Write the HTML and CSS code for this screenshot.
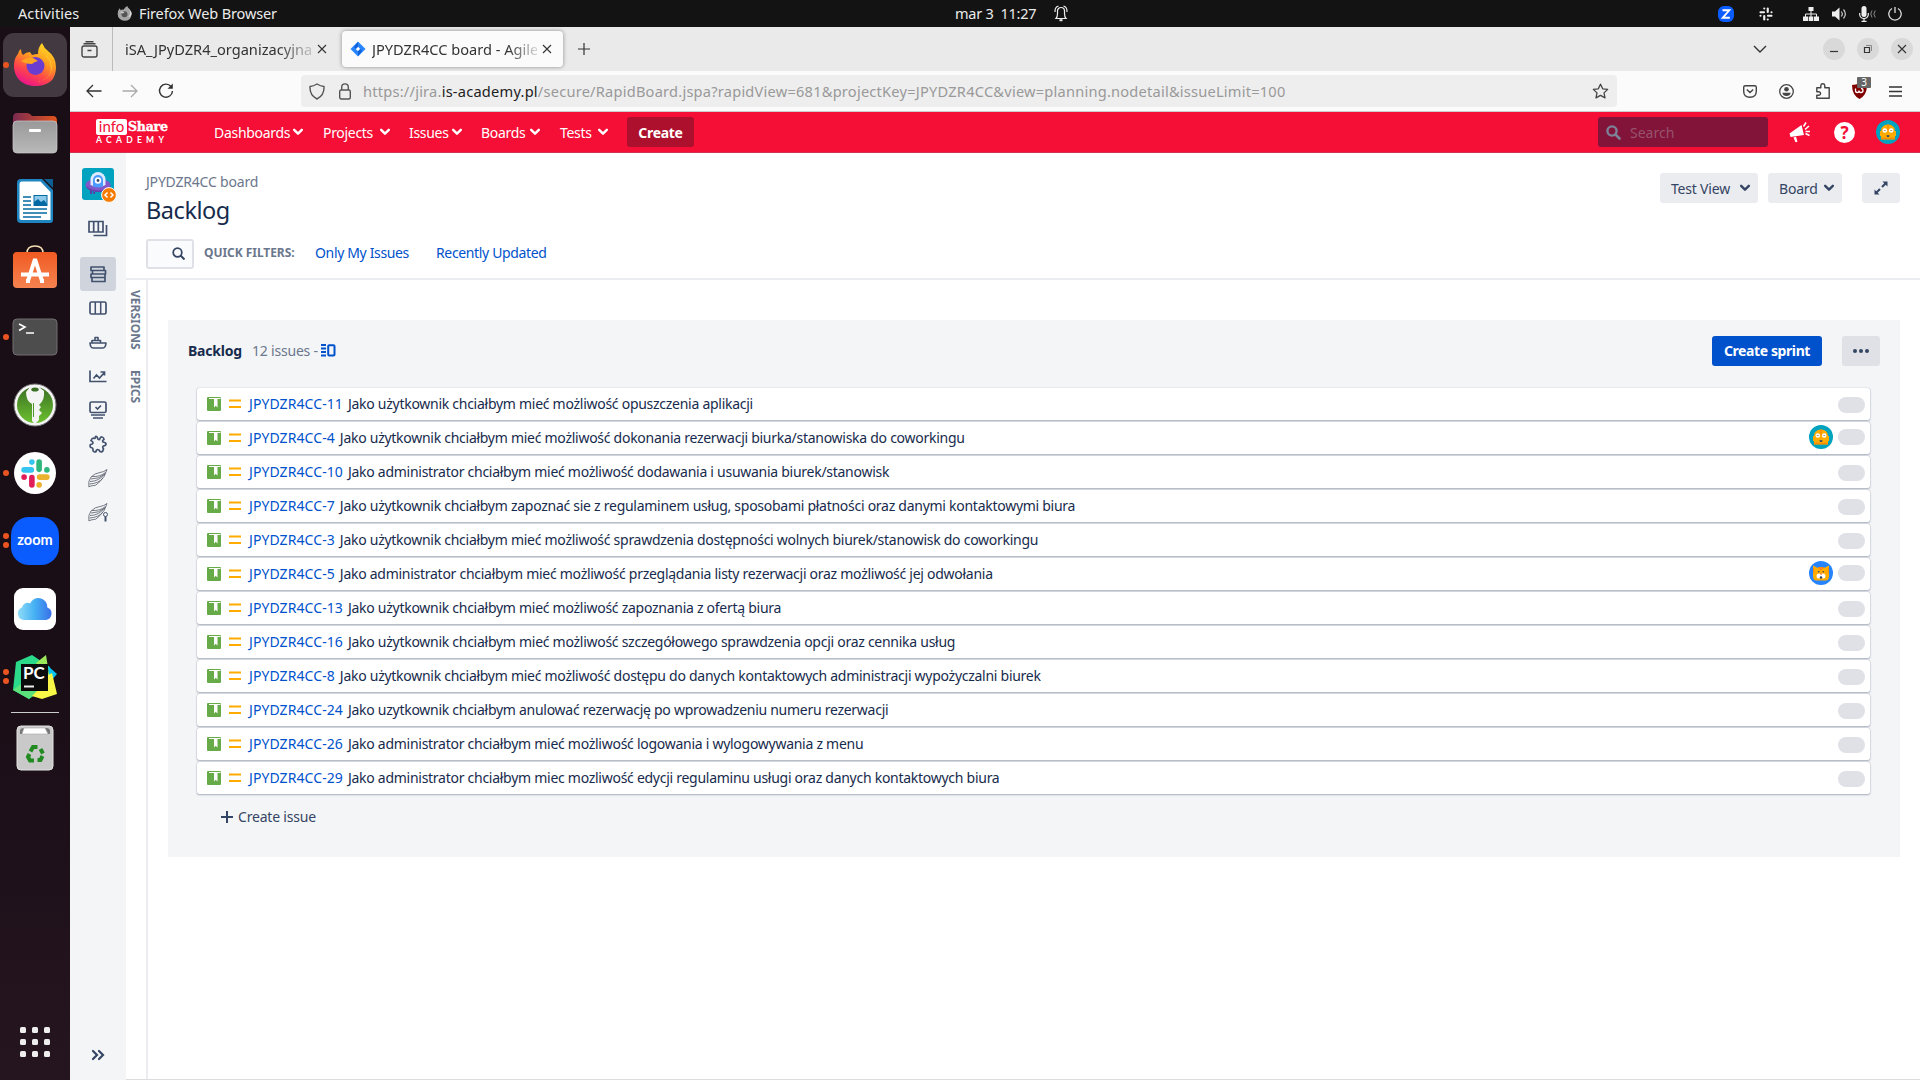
FILE: index.html
```html
<!DOCTYPE html>
<html lang="pl">
<head>
<meta charset="utf-8">
<title>JPYDZR4CC board - Agile Board</title>
<link rel="stylesheet" href="styles.css">
</head>
<body>
<svg class="defs" aria-hidden="true">
  <defs>
    <linearGradient id="fx" x1=".8" y1="0" x2=".3" y2="1"><stop offset="0" stop-color="#ffe226"/><stop offset=".4" stop-color="#ff9a1f"/><stop offset=".7" stop-color="#ff4649"/><stop offset="1" stop-color="#e9118f"/></linearGradient>
    <linearGradient id="fold" x1="0" y1="0" x2="0" y2="1"><stop offset="0" stop-color="#999"/><stop offset="1" stop-color="#b9b9b9"/></linearGradient>
    <linearGradient id="foldback"><stop offset="0" stop-color="#7b2a52"/><stop offset="1" stop-color="#e2541d"/></linearGradient>
    <linearGradient id="key" x1="0" y1="0" x2="0" y2="1"><stop offset="0" stop-color="#3a7024"/><stop offset="1" stop-color="#6cc02f"/></linearGradient>
    <linearGradient id="cloud"><stop offset="0" stop-color="#8fdcf8"/><stop offset=".5" stop-color="#45b0f3"/><stop offset="1" stop-color="#3a70e8"/></linearGradient>
    <linearGradient id="soft" x1="0" y1="0" x2="0" y2="1"><stop offset="0" stop-color="#f15a22"/><stop offset="1" stop-color="#f58350"/></linearGradient>
    <symbol id="chev" viewBox="0 0 10 10"><path d="M1.800 3.200 5 6.400l3.200-3.200" fill="none" stroke="currentColor" stroke-width="2" stroke-linecap="round" stroke-linejoin="round"/></symbol>
    <symbol id="close" viewBox="0 0 10 10"><path d="M1 1l8 8M9 1 1 9" fill="none" stroke="currentColor" stroke-width="1.100"/></symbol>
    <symbol id="story" viewBox="0 0 14 14"><rect width="14" height="14" rx="1" fill="#67ab49"/><path d="M2 1.500h11.500" stroke="#fff"/><path d="M7 1.500h3.500v9L8.700 8.800 7 10.500z" fill="#fff"/></symbol>
    <symbol id="medium" viewBox="0 0 12 10"><path d="M0 1.500h12M0 8h12" stroke="#ffab00" stroke-width="2"/></symbol>
    <symbol id="robot" viewBox="0 0 24 24"><circle cx="12" cy="12" r="12" fill="#00a3bf"/><path d="M5 11q0-6 7-6.500 7 .5 7 6.500h1v5h-1v3.500H5V16H4v-5z" fill="#ffab00"/><path d="M12 4.500v6M5 18.500h14" stroke="#ff8b00" stroke-width="1.400"/><circle cx="8.800" cy="10.500" r="2.300" fill="#fff"/><circle cx="15.200" cy="10.500" r="2.300" fill="#fff"/><path d="M7.800 10.500h2M14.200 10.500h2" stroke="#aa9a80"/><path d="M10.300 15.200h3.400L12.800 17h-1.600z" fill="#344563"/></symbol>
    <symbol id="cat" viewBox="0 0 24 24"><circle cx="12" cy="12" r="12" fill="#2684ff"/><path d="M4 4.500 9 7h6l5-2.500V15q0 4.500-3.500 4.500h-9Q4 19.500 4 15z" fill="#ffab00"/><path d="M9.500 6.500h5L12 9zM4.500 7v5M19.500 7v5" fill="#ff7452" stroke="#ff8b00"/><circle cx="9.700" cy="10.700" r=".8" fill="#344563"/><circle cx="14.300" cy="10.700" r=".8" fill="#344563"/><circle cx="10" cy="15" r="2.500" fill="#fff"/><circle cx="14" cy="15" r="2.500" fill="#fff"/><path d="M10.700 12.500h2.600L12 14.200z" fill="#ff7452"/><circle cx="12" cy="16.500" r="1.200" fill="#344563"/></symbol>
    <symbol id="feather" viewBox="0 0 20 20"><path d="M19 1.500Q17 9 12 13.500 8 18.500 3 18L.8 18.800Q0 13 3 9q4-4 9-4.500 4-.5 7-3zM2 13.500q9 0 15-8M1.500 16q9-.5 13.500-6M4 8.500q8 .5 13.500-4M3 11q8 0 14-5" fill="none" stroke="#555c68" stroke-width=".8"/></symbol>
    <symbol id="slackmark" viewBox="0 0 28 28"><g stroke-width="5.400" stroke-linecap="round"><path d="M3 10.500h7M10.500 3h.01" stroke="#36c5f0"/><path d="M17.500 3v7M25 10.500h.01" stroke="#2eb67d"/><path d="M25 17.500h-7M17.500 25h.01" stroke="#ecb22e"/><path d="M10.500 25v-7M3 17.500h.01" stroke="#e01e5a"/></g></symbol>
  </defs>
</svg>

<header class="topbar">
  <span class="activities">Activities</span>
  <span class="app-menu"><svg width="15" height="15" viewBox="0 0 16 16"><path d="M8 15.800A7.300 7.300 0 0 1 .7 8.500Q.7 5 2.800 2.500L4 4.500Q5.500 3.500 7 4q1.500-3 4-4 .5 2 2.500 4t2 5q-.5 6.800-7.500 6.800z" fill="#a5a5a5"/><path d="M11 1q3 3 3 6t-2 5q4-1 3.500-5Q14 3 11 1z" fill="#ddd"/><circle cx="8" cy="8.700" r="3.200" fill="#555"/><path d="M3 6.500q2.500-1.500 5 .3L6 8z" fill="#ccc"/></svg>Firefox Web Browser</span>
  <span class="clock">mar 3&nbsp; 11:27<svg width="14" height="17" viewBox="0 0 14 17"><path d="M2 13.500Q3.500 12 3.500 8.500V6a3.500 3.500 0 0 1 7 0v2.500q0 3.500 1.500 5zM1 7q-.3-5 3.500-6M13 7q.3-5-3.500-6" fill="none" stroke="#eee" stroke-width="1.200"/><path d="M5.500 15.200h3" stroke="#eee" stroke-width="2"/></svg></span>
  <span class="tray">
    <svg class="t1" width="16" height="16" viewBox="0 0 16 16"><rect width="16" height="16" rx="6" fill="#0b5cff"/><path d="M4.500 4.300h6.800L4.800 11.700h7" fill="none" stroke="#fff" stroke-width="1.900"/></svg>
    <svg class="t2" width="14" height="14" viewBox="0 0 28 28"><g stroke="#eee" stroke-width="4.300" stroke-linecap="round"><path d="M3 10.500h7M10.500 3h.01M17.500 3v7M25 10.500h.01M25 17.500h-7M17.500 25h.01M10.500 25v-7M3 17.500h.01"/></g></svg>
    <svg class="t3" width="16" height="14" viewBox="0 0 16 14"><path d="M5.500 0h5v4h-5zM0 9.500h5V14H0zM5.700 9.500h4.600V14H5.700zM11 9.500h5V14h-5z" fill="#eee"/><path d="M8 4v6M2.500 10V7h11v3" stroke="#eee" fill="none"/></svg>
    <svg class="t4" width="15" height="14" viewBox="0 0 15 14"><path d="M0 4.500h3L7.500.5v13L3 9.500H0z" fill="#eee"/><path d="M9.300 4.500q2 2.500 0 5M11.500 2.500q3.700 4.500 0 9" fill="none" stroke="#ccc" stroke-width="1.200"/></svg>
    <svg class="t5" width="17" height="16" viewBox="0 0 17 16"><rect x="2.500" width="5" height="11" rx="2.500" fill="#eee"/><path d="M.7 7v1.500a4.300 4 0 0 0 8.600 0V7M5 12.500V15M2.500 15.300h5" fill="none" stroke="#eee" stroke-width="1.200"/><path d="M13 4.500q-2.500 3.500 0 7M16.300 4.500q-3 3.500 0 7" fill="none" stroke="#888"/></svg>
    <svg class="t6" width="14" height="14" viewBox="0 0 14 14"><path d="M4 1.500a6.200 6.200 0 1 0 6 0M7 0v6" fill="none" stroke="#ddd" stroke-width="1.300"/></svg>
  </span>
</header>

<div class="desktop">
  <nav class="dock">
    <div class="dock-item current"><i class="run"></i><svg width="44" height="44" viewBox="0 0 44 44"><path d="M22 43C9 43 1 34 1 23 1 17 3 13 5 11q0-3 3-5 0 4 2 6 3-3 7-3l2 3q3-1 6-1Q25 4 29 0q2 5 6 8 8 6 8 16 0 19-21 19z" fill="url(#fx)"/><path d="M31 11q8 5 8 13 0 12-15 15Q43 35 36 17z" fill="#ffd43a" opacity=".6"/><circle cx="22.500" cy="23" r="9" fill="#6a3ccf"/><path d="M8 18q6-4 12-3l5 3q-4 1-6 3-7 0-11-3z" fill="#ffa322"/></svg></div>
    <div class="dock-item"><svg width="46" height="42" viewBox="0 0 46 42"><path d="M1 6q0-5 4-5h10q3 0 5 3h21q4 0 4 5v12H1z" fill="url(#foldback)"/><rect x="1" y="9" width="44" height="32" rx="4" fill="url(#fold)" stroke="#ccc" stroke-width=".7"/><rect x="17" y="17" width="12" height="3" rx="1" fill="#fff"/></svg></div>
    <div class="dock-item"><svg width="38" height="46" viewBox="0 0 38 46"><path d="M5 1h21l11 11v30q0 3-3 3H5q-4 0-4-4V5q0-4 4-4z" fill="#1e85c0"/><path d="M28 1h9v9z" fill="#0d5f92"/><path d="M5.500 3.500h19L34.500 14v28h-29q-2 0-2-2v-34q0-2.500 2-2.500z" fill="#fff"/><path d="M7 19h8M7 23h8M7 27h8M7 31h24M7 35h24M7 39h18" stroke="#0369a3" stroke-width="1.700"/><rect x="18" y="17.500" width="13" height="10" fill="#8ec9ea" stroke="#0369a3"/><path d="M18 27v-3l4-3 3 3 3-2 3 4v1z" fill="#0369a3"/></svg></div>
    <div class="dock-item store"><svg width="46" height="44" viewBox="0 0 46 44"><path d="M15 8q0-7 8-7t8 7" fill="none" stroke="#f6dfb2" stroke-width="1.600"/><rect x="1" y="7" width="44" height="36" rx="4" fill="url(#soft)"/><path d="M16 36 23 14l7 22M9 29.500h28M14 36h4M28 36h4" stroke="#fff" fill="none" stroke-width="4" stroke-linejoin="bevel"/></svg></div>
    <div class="dock-item"><i class="run"></i><svg width="46" height="38" viewBox="0 0 46 38"><rect x="1" y="1" width="44" height="36" rx="4" fill="#4d4d4d" stroke="#707070"/><path d="m7 6 6 3-6 3.500M14 15h8" stroke="#fff" stroke-width="1.600" fill="none"/></svg></div>
    <div class="dock-item"><svg width="44" height="44" viewBox="0 0 44 44"><circle cx="22" cy="22" r="21" fill="#f4f4f4" stroke="#777" stroke-width="1"/><circle cx="22" cy="22" r="18" fill="url(#key)"/><path d="M13 9q0 9 6 12v17l3 3 4-4v-4l3-3-3-3 2-3-2-2q6-5 5-14l-5-4h-9z" fill="#f4f4f4"/><ellipse cx="22" cy="6.500" rx="3.700" ry="2" fill="#3a7024"/><path d="M20.500 20v14" stroke="#4d9527"/></svg></div>
    <div class="dock-item"><i class="run"></i><span class="round"><svg width="29" height="29"><use href="#slackmark"/></svg></span></div>
    <div class="dock-item"><i class="run two"></i><span class="zoom-app">zoom</span></div>
    <div class="dock-item"><span class="cloud-app"><svg width="36" height="24" viewBox="0 0 36 24"><path d="M7 23a6.500 6.500 0 0 1-2-12.500A5.500 5.500 0 0 1 13 6.500a9 9 0 0 1 17.300 4A6.500 6.500 0 0 1 29 23z" fill="url(#cloud)"/></svg></span></div>
    <div class="dock-item"><i class="run two"></i><span class="pycharm"><svg width="46" height="46" viewBox="0 0 46 46"><path d="M4 8 20 1l18 12-12 26-9 6L1 36z" fill="#2bd98b"/><path d="M24 9 34 1l4 25z" fill="#9be85b"/><path d="m36 12 9 8-7 8z" fill="#07c3f2"/><path d="m40 19 5 21-15 5-17-5 4-9z" fill="#f8f646"/><path d="M1 36 17 24l9 12-9 9z" fill="#5be27a"/><rect x="9" y="10" width="27" height="27" fill="#0b0b0b"/><path d="M12 32.500h10" stroke="#eee" stroke-width="2"/></svg><b>PC</b></span></div>
    <hr>
    <div class="dock-item trash"><svg width="38" height="46" viewBox="0 0 38 46"><rect x="1" y="1" width="36" height="44" rx="4" fill="#c9c9c9" stroke="#e3e3e3"/><path d="M4 9V6q0-3 4-3h22q4 0 4 3v3z" fill="#777"/><path d="m6 9 2-6h21l3 6z" fill="#fff" stroke="#aaa" stroke-width=".6"/><g fill="none" stroke="#218a21" stroke-width="4"><path d="m14.500 26.500 2.500-4.500h4.500M24.500 24l2.500 4.500M26.500 31 24.500 35h-3M18 35.500h-4l-2-3.500 1.500-3"/></g></svg></div>
    <div class="apps"><i></i><i></i><i></i><i></i><i></i><i></i><i></i><i></i><i></i></div>
  </nav>

  <main class="window">
    <div class="tabs">
      <span class="view-btn"><svg width="17" height="17" viewBox="0 0 17 17" fill="none" stroke="#444" stroke-width="1.400"><rect x="1" y="5" width="15" height="11" rx="2"/><path d="M2.500 2.800h12M4.500.7h8M6.500 9.500h4"/></svg></span>
      <div class="tab"><span class="label">iSA_JPyDZR4_organizacyjna</span><svg width="10" height="10"><use href="#close"/></svg></div>
      <div class="tab active"><svg class="fav" width="16" height="16" viewBox="0 0 16 16"><path d="m8 .5 7.500 7.500L8 15.500.5 8z" fill="#2684ff"/><path d="m8 5.700 2.300 2.300L8 10.300 5.700 8z" fill="#fff"/><path d="M8 1v4.700L5.700 8 4 6zM8 15v-4.700L10.300 8 12 10z" fill="#0f60d8"/></svg><span class="label">JPYDZR4CC board - Agile</span><svg width="10" height="10"><use href="#close"/></svg></div>
      <svg class="newtab" width="12" height="12" viewBox="0 0 12 12"><path d="M6 0v12M0 6h12" stroke="#333" stroke-width="1.200"/></svg>
      <svg class="alltabs" width="14" height="9" viewBox="0 0 14 9"><path d="m1 1 6 6 6-6" fill="none" stroke="#333" stroke-width="1.400"/></svg>
      <span class="win"><svg width="10" height="10" viewBox="0 0 10 10"><path d="M1 7.500h8" stroke="#333" stroke-width="1.200"/></svg></span>
      <span class="win"><svg width="10" height="10" viewBox="0 0 10 10" fill="none" stroke="#333"><path d="M1.500 3.500h5v5h-5z" stroke-width="1.200"/><path d="M3 1.500h5.500V7" stroke="#888"/></svg></span>
      <span class="win"><svg width="10" height="10"><use href="#close"/></svg></span>
    </div>

    <div class="toolbar">
      <svg class="back" width="16" height="14" viewBox="0 0 16 14"><path d="M15.500 7H1.500M7 1 1 7l6 6" fill="none" stroke="#333" stroke-width="1.300"/></svg>
      <svg class="fwd" width="16" height="14" viewBox="0 0 16 14"><path d="M.5 7h14M9 1l6 6-6 6" fill="none" stroke="#aaa" stroke-width="1.300"/></svg>
      <svg class="reload" width="16" height="16" viewBox="0 0 16 16"><path d="M13 3.500A6.500 6.500 0 1 0 14.500 8" fill="none" stroke="#333" stroke-width="1.400"/><path d="M14.800.5v5.300H9.500z" fill="#333"/></svg>
      <div class="url">
        <svg width="16" height="17" viewBox="0 0 16 17"><path d="M8 1q3.500 2.300 7 2.500Q15.500 12.500 8 16 .5 12.500 1 3.500 4.500 3.300 8 1z" fill="none" stroke="#555" stroke-width="1.400" stroke-linejoin="round"/></svg>
        <svg class="lock" width="12" height="17" viewBox="0 0 12 17"><rect x=".7" y="7" width="10.600" height="9" rx="1.500" fill="none" stroke="#555" stroke-width="1.400"/><path d="M2.700 7V4.200a3.300 3.300 0 0 1 6.600 0V7" fill="none" stroke="#555" stroke-width="1.400"/></svg>
        <span class="address">https://jira.<b>is-academy.pl</b>/secure/RapidBoard.jspa?rapidView=681&amp;projectKey=JPYDZR4CC&amp;view=planning.nodetail&amp;issueLimit=100</span>
        <svg width="17" height="16" viewBox="0 0 17 16"><path d="m8.500 1.200 2.200 4.600 5 .6-3.700 3.500 1 5-4.500-2.500L4 14.900l1-5L1.300 6.400l5-.6z" fill="none" stroke="#444" stroke-width="1.300" stroke-linejoin="round"/></svg>
      </div>
      <div class="exts">
        <svg width="14" height="13" viewBox="0 0 14 13" fill="none" stroke="#444" stroke-width="1.400"><path d="M2.300.7h9.400q1.600 0 1.600 1.600v4q0 6-6.300 6t-6.300-6v-4Q.7.700 2.300.7zM3.800 4.500 7 7.500l3.200-3"/></svg>
        <svg width="15" height="15" viewBox="0 0 15 15"><circle cx="7.500" cy="7.500" r="6.800" fill="none" stroke="#444" stroke-width="1.300"/><circle cx="7.500" cy="5.300" r="2.300" fill="#444"/><path d="M3.300 8.700h8.400q-.7 3.300-4.200 3.300T3.300 8.700z" fill="#444"/></svg>
        <svg width="14" height="16" viewBox="0 0 14 16"><path d="M.8 4.700h4V2.500q.2-1.700 2-1.700t2 1.700v2.200h4.400v10.500H.8v-3h2.500q1.300-.4 1.300-1.700T3.300 8.800H.8z" fill="none" stroke="#444" stroke-width="1.400" stroke-linejoin="round"/></svg>
        <span class="ublock"><svg width="15" height="16" viewBox="0 0 15 16"><path d="M7.500 0Q11 2 15 2q0 10-7.500 14Q0 12 0 2q4 0 7.500-2z" fill="#800000"/><path d="M3.500 5.500v2q0 2 1.800 2t1.700-2q0 2 2 2t2-2-2-2" fill="none" stroke="#fff" stroke-width="1.300"/></svg><em>3</em></span>
        <svg width="13" height="11" viewBox="0 0 13 11"><path d="M0 1h13M0 5.500h13M0 10h13" stroke="#333" stroke-width="1.400"/></svg>
      </div>
    </div>

    <div class="jira-head">
      <div class="logo"><span><i>info</i><b>Share</b></span><small>ACADEMY</small></div>
      <a class="n1">Dashboards<svg width="12" height="12"><use href="#chev"/></svg></a>
      <a class="n2">Projects<svg width="12" height="12"><use href="#chev"/></svg></a>
      <a class="n3">Issues<svg width="12" height="12"><use href="#chev"/></svg></a>
      <a class="n4">Boards<svg width="12" height="12"><use href="#chev"/></svg></a>
      <a class="n5">Tests<svg width="12" height="12"><use href="#chev"/></svg></a>
      <button class="create">Create</button>
      <div class="search"><svg width="15" height="15" viewBox="0 0 15 15"><circle cx="6" cy="6" r="4.600" fill="none" stroke="#7e8299" stroke-width="2.400"/><path d="m9.500 9.500 4 4" stroke="#7e8299" stroke-width="2.600" stroke-linecap="round"/></svg>Search</div>
      <svg class="mega" width="22" height="21" viewBox="0 0 22 21"><path d="M.5 11.500 12.500 3l2.500 10-13.500 2zM4.500 15.500 7 14.700l1.500 5-2 .6z" fill="#fff"/><path d="m14.500 4.500 2.500-4M16 7.500l4-3.500M16.500 9.500h4.500M16.500 11.500l4 2" stroke="#fff" stroke-width="1.600"/></svg>
      <span class="help">?</span>
      <svg class="me" width="24" height="24"><use href="#robot"/></svg>
    </div>

    <div class="body">
      <aside class="rail">
        <div class="project"><svg width="32" height="32" viewBox="0 0 32 32"><rect width="32" height="32" rx="3" fill="#00a3bf"/><path d="M9 22v4M23 22v4M12 24v2" stroke="#5243aa" stroke-width="2"/><ellipse cx="16" cy="17" rx="12.500" ry="6.500" fill="#8257c9"/><path d="M4 18q12 9 25 0-2 6-12.500 6T4 18z" fill="#6342ad"/><path d="M8.500 17V11.500a7.500 7.500 0 0 1 15 0V17q-7 4-15 0z" fill="#deebff"/><path d="M11 18.500V12a5 5 0 0 1 10 0v6.500q-5 2-10 0z" fill="#4c9aff"/><circle cx="16" cy="12.500" r="3.200" fill="#fff"/><circle cx="16" cy="12.500" r="1.400" fill="#344563"/></svg>
          <svg class="badge" width="16" height="16" viewBox="0 0 16 16"><circle cx="8" cy="8" r="7.400" fill="#f57c00" stroke="#fff"/><path d="M6.500 5.500 4 8l2.500 2.500M9.500 5.500 12 8l-2.500 2.500" fill="none" stroke="#fff" stroke-width="1.500"/></svg></div>
        <svg class="boards" width="20" height="17" viewBox="0 0 20 17"><path d="M1 1.500h14V12H1zM5.700 1.500V12M10.300 1.500V12M18.500 5v10.500H5.500" fill="none" stroke="#42526e" stroke-width="1.700"/></svg>
        <span class="cell on"><svg width="18" height="17" viewBox="0 0 18 17"><path d="M2 1h13v3.500H2zM3.500 4.500h13V8h-13zM2 8h14v3.500H2zM3 11.500h13v4H3z" fill="none" stroke="#42526e" stroke-width="1.700" stroke-linejoin="round"/></svg></span>
        <span class="cell"><svg width="18" height="14" viewBox="0 0 18 14"><rect x="1" y="1" width="16" height="12" rx="1.500" fill="none" stroke="#42526e" stroke-width="1.700"/><path d="M6.300 1v12M11.700 1v12" stroke="#42526e" stroke-width="1.500"/></svg></span>
        <span class="cell"><svg width="18" height="13" viewBox="0 0 18 13"><path d="M1 7h16q-.5 5-3 5H4Q1.500 12 1 7zM3 7V4.500h8.500V7M6 4.500V1.500h3v3" fill="none" stroke="#42526e" stroke-width="1.600" stroke-linejoin="round"/></svg></span>
        <span class="cell"><svg width="18" height="13" viewBox="0 0 18 13"><path d="M1 .5v11h16.500M4.500 8.500 7.500 5l3 3 4.500-5M11.500 2H15.500v3.500" fill="none" stroke="#42526e" stroke-width="1.700"/></svg></span>
        <span class="cell"><svg width="18" height="18" viewBox="0 0 18 18"><rect x="1" y="1" width="16" height="10.500" rx="1.500" fill="none" stroke="#42526e" stroke-width="1.700"/><path d="m6.500 6 2 2 3.500-3.500M2 14h14M4 17h10" fill="none" stroke="#42526e" stroke-width="1.700"/></svg></span>
        <span class="cell"><svg width="18" height="18" viewBox="0 0 18 18"><path d="M6.500 1.500q1.500-.5 2 1.500.5 2 2 1.500 1-3 2.500-2.500 2 .5 2 2.500-2 1-1 2.500 3 .5 3 2t-2.500 2q-1.500 1 0 3-.5 2.500-2 3-2 0-2.500-2-1.500-1-2.500 0 0 2-2 2-2-.5-1.500-3-.5-1.500-2-1.500-1.500-1-.5-3 2 0 2.500-1.500 0-1.500-2-2.500 1-2.500 2.500-2.500Q6.500 4.500 6.500 1.500z" fill="none" stroke="#42526e" stroke-width="1.700"/></svg></span>
        <span class="cell"><svg width="20" height="20"><use href="#feather"/></svg></span>
        <span class="cell"><svg width="20" height="20" viewBox="0 0 20 20"><use href="#feather" width="20" height="20"/><circle cx="17.500" cy="12.500" r="2" fill="#f4f5f7" stroke="#42526e"/><path d="M17.500 14.500v5" stroke="#42526e" stroke-width="2"/></svg></span>
        <svg class="expand" width="14" height="12" viewBox="0 0 14 12"><path d="m2 2 4 4-4 4M8 2l4 4-4 4" fill="none" stroke="#344563" stroke-width="2.200" stroke-linecap="round"/></svg>
      </aside>

      <section class="board">
        <div class="board-head">
          <div class="titles">
            <div class="crumb">JPYDZR4CC board</div>
            <h1>Backlog</h1>
            <div class="filters">
              <span class="find"><svg width="13" height="13" viewBox="0 0 13 13"><circle cx="5.500" cy="5.500" r="4.300" fill="none" stroke="#344563" stroke-width="1.700"/><path d="m8.500 8.500 4 4" stroke="#344563" stroke-width="2"/></svg></span>
              <span class="qf">QUICK FILTERS:</span><a class="f1">Only My Issues</a><a class="f2">Recently Updated</a>
            </div>
          </div>
          <div class="actions">
            <button class="a1">Test View<svg width="12" height="12"><use href="#chev"/></svg></button>
            <button class="a2">Board<svg width="12" height="12"><use href="#chev"/></svg></button>
            <button class="a3"><svg width="14" height="14" viewBox="0 0 14 14"><path d="M8.500.5h5v5zM.5 8.500v5h5z" fill="#344563"/><path d="m12 2-4 4M2 12l4-4" stroke="#344563" stroke-width="2"/></svg></button>
          </div>
        </div>
        <div class="board-body">
          <div class="strip"><span>VERSIONS</span><span>EPICS</span></div>
          <div class="panel">
            <div class="panel-head">
              <b>Backlog</b><span class="count">12 issues -</span>
              <svg width="15" height="13" viewBox="0 0 15 13"><path d="M0 1h5M0 4.500h5M0 8h5M0 11.500h5" stroke="#0052cc" stroke-width="1.800"/><rect x="7.200" y="1.200" width="6.300" height="10.300" rx="1" fill="none" stroke="#0052cc" stroke-width="2"/></svg>
              <button class="sprint">Create sprint</button>
              <button class="more"><i></i><i></i><i></i></button>
            </div>
            <div class="issues">
              <div class="issue"><svg class="s"><use href="#story"/></svg><svg class="p"><use href="#medium"/></svg><a>JPYDZR4CC-11</a><span>Jako użytkownik chciałbym mieć możliwość opuszczenia aplikacji</span><i></i></div>
              <div class="issue owned"><svg class="s"><use href="#story"/></svg><svg class="p"><use href="#medium"/></svg><a>JPYDZR4CC-4</a><span>Jako użytkownik chciałbym mieć możliwość dokonania rezerwacji biurka/stanowiska do coworkingu</span><svg class="av"><use href="#robot"/></svg><i></i></div>
              <div class="issue"><svg class="s"><use href="#story"/></svg><svg class="p"><use href="#medium"/></svg><a>JPYDZR4CC-10</a><span>Jako administrator chciałbym mieć możliwość dodawania i usuwania biurek/stanowisk</span><i></i></div>
              <div class="issue"><svg class="s"><use href="#story"/></svg><svg class="p"><use href="#medium"/></svg><a>JPYDZR4CC-7</a><span>Jako użytkownik chciałbym zapoznać sie z regulaminem usług, sposobami płatności oraz danymi kontaktowymi biura</span><i></i></div>
              <div class="issue"><svg class="s"><use href="#story"/></svg><svg class="p"><use href="#medium"/></svg><a>JPYDZR4CC-3</a><span>Jako użytkownik chciałbym mieć możliwość sprawdzenia dostępności wolnych biurek/stanowisk do coworkingu</span><i></i></div>
              <div class="issue owned"><svg class="s"><use href="#story"/></svg><svg class="p"><use href="#medium"/></svg><a>JPYDZR4CC-5</a><span>Jako administrator chciałbym mieć możliwość przeglądania listy rezerwacji oraz możliwość jej odwołania</span><svg class="av"><use href="#cat"/></svg><i></i></div>
              <div class="issue"><svg class="s"><use href="#story"/></svg><svg class="p"><use href="#medium"/></svg><a>JPYDZR4CC-13</a><span>Jako użytkownik chciałbym mieć możliwość zapoznania z ofertą biura</span><i></i></div>
              <div class="issue"><svg class="s"><use href="#story"/></svg><svg class="p"><use href="#medium"/></svg><a>JPYDZR4CC-16</a><span>Jako użytkownik chciałbym mieć możliwość szczegółowego sprawdzenia opcji oraz cennika usług</span><i></i></div>
              <div class="issue"><svg class="s"><use href="#story"/></svg><svg class="p"><use href="#medium"/></svg><a>JPYDZR4CC-8</a><span>Jako użytkownik chciałbym mieć możliwość dostępu do danych kontaktowych administracji wypożyczalni biurek</span><i></i></div>
              <div class="issue"><svg class="s"><use href="#story"/></svg><svg class="p"><use href="#medium"/></svg><a>JPYDZR4CC-24</a><span>Jako uzytkownik chciałbym anulować rezerwację po wprowadzeniu numeru rezerwacji</span><i></i></div>
              <div class="issue"><svg class="s"><use href="#story"/></svg><svg class="p"><use href="#medium"/></svg><a>JPYDZR4CC-26</a><span>Jako administrator chciałbym mieć możliwość logowania i wylogowywania z menu</span><i></i></div>
              <div class="issue"><svg class="s"><use href="#story"/></svg><svg class="p"><use href="#medium"/></svg><a>JPYDZR4CC-29</a><span>Jako administrator chciałbym miec mozliwość edycji regulaminu usługi oraz danych kontaktowych biura</span><i></i></div>
            </div>
            <div class="new-issue"><svg width="12" height="12" viewBox="0 0 12 12"><path d="M6 0v12M0 6h12" stroke="#344563" stroke-width="2"/></svg>Create issue</div>
          </div>
        </div>
      </section>
    </div>
  </main>
</div>
</body>
</html>
```
FILE: styles.css
```css
* { box-sizing: border-box; }
body {
  margin: 0; width: 1920px; height: 1080px; overflow: hidden;
  display: flex; flex-direction: column;
  font-family: "Noto Sans", "Open Sans", sans-serif;
  font-size: 14px; font-stretch: 87.5%; color: #172b4d; background: #fff;
}
svg { display: block; flex: none; }
button { font: inherit; letter-spacing: inherit; border: 0; padding: 0; margin: 0; display: flex; align-items: center; }
.defs { width: 0; height: 0; position: absolute; }
i, em { font-style: normal; }

/* system bar */
.topbar { height: 27px; flex: none; background: #131313; color: #ebebeb; display: grid; grid-template-columns: 117px 838px 1fr auto; align-items: center; font-size: 14.5px; line-height: 25px; letter-spacing: -.12px; }
.activities { padding-left: 18px; letter-spacing: .1px; }
.app-menu { display: flex; align-items: center; gap: 7px; }
.clock { display: flex; align-items: center; gap: 18px; white-space: nowrap; letter-spacing: -.25px; }
.tray { display: flex; align-items: center; padding-right: 18px; }
.t1 { margin-right: 25px; } .t2 { margin-right: 30px; } .t3 { margin-right: 13px; }
.t4 { margin-right: 12px; } .t5 { margin-right: 12px; }

.desktop { flex: 1; display: flex; min-height: 0; }

/* dock */
.dock { width: 70px; flex: none; padding-top: 4px; display: flex; flex-direction: column; background: linear-gradient(#190d16 60%, #25151f); }
.dock-item { height: 68px; flex: none; display: flex; align-items: center; justify-content: center; position: relative; }
.dock-item.current::before { content: ""; position: absolute; inset: 2px 3px; border-radius: 11px; background: #433941; }
.dock-item.store { padding-bottom: 4px; }
.dock-item > * { position: relative; }
.dock-item > .run { position: absolute; left: 3px; top: 31px; width: 6px; height: 6px; border-radius: 50%; background: #e95420; }
.dock-item > .run.two { top: 26px; box-shadow: 0 9px #e95420; }
.round { width: 42px; height: 42px; border-radius: 50%; background: #fff; display: grid; place-items: center; }
.zoom-app { width: 48px; height: 48px; border-radius: 18px; background: #0b5cff; color: #fff; font: 700 14.5px/45px "Lato", sans-serif; text-align: center; }
.cloud-app { width: 42px; height: 42px; border-radius: 9px; background: #fff; display: grid; place-items: center; }
.pycharm b { position: absolute; left: 11px; top: 10px; color: #fff; font: 700 17px/18px "Lato", sans-serif; }
.dock hr { width: 48px; height: 1px; margin: 1px auto 0; border: 0; background: #ccc; flex: none; }
.trash { height: 70px; }
.apps { margin: auto 0 23px 20px; display: grid; grid-template-columns: repeat(3, 6px); gap: 6px; }
.apps i { width: 6px; height: 6px; border-radius: 1.5px; background: #eee; }

/* browser window */
.window { flex: 1; display: flex; flex-direction: column; min-width: 0; }
.tabs { height: 44px; flex: none; background: #eaeaea; display: flex; align-items: center; color: #333; font-size: 14.6px; padding-right: 7px; }
.view-btn { width: 43px; height: 44px; display: grid; place-items: center; border-right: 1px solid #bbb; padding-right: 3px; }
.tab { width: 221px; height: 36px; display: flex; align-items: center; justify-content: space-between; padding: 0 7px 0 12px; margin-right: 8px; }
.tab + .tab { padding: 0 11px 0 8px; margin-right: 15px; }
.tab .label { white-space: nowrap; overflow: hidden; width: 187px; -webkit-mask: linear-gradient(90deg, #000 82%, transparent 104%); mask: linear-gradient(90deg, #000 82%, transparent 104%); }
.tab.active { background: #fbfbfb; border-radius: 4px; box-shadow: 0 0 4px rgba(0, 0, 0, .4); }
.tab.active .label { width: 166px; margin-right: 5px; }
.tab.active .fav { margin-right: 6px; }
.alltabs { margin: 0 56px 0 auto; }
.win { width: 22px; height: 22px; border-radius: 50%; background: #d9d9d9; display: grid; place-items: center; margin-left: 12px; }
.alltabs + .win { margin-left: 0; }

.toolbar { height: 41px; flex: none; background: #fbfbfb; border-bottom: 1px solid #ccc; display: flex; align-items: center; padding: 0 18px 0 16px; }
.fwd { margin: 0 20px; }
.url { margin-left: 127px; width: 1316px; height: 32px; border-radius: 4px; background: #eee; display: flex; align-items: center; padding: 0 8px; }
.lock { margin: 0 12px 0 14px; }
.address { flex: 1; color: #999; font-size: 14.6px; white-space: nowrap; letter-spacing: .23px; }
.address b { font-weight: 400; color: #222; }
.exts { margin-left: auto; display: flex; align-items: center; gap: 22px; }
.ublock { position: relative; }
.ublock em { position: absolute; left: 5px; top: -6px; width: 14px; height: 11px; border-radius: 1px; background: #666; color: #fff; font-size: 10px; line-height: 11px; text-align: center; }

/* jira header */
.jira-head { height: 41px; flex: none; background: #f50e35; border-bottom: 1px solid #cf3350; display: flex; align-items: center; padding: 0 20px 0 26px; color: #fff; font-size: 14px; letter-spacing: -.3px; }
.logo { width: 118px; display: flex; flex-direction: column; gap: 1px; letter-spacing: 0; }
.logo span { display: flex; align-items: center; }
.logo i { width: 31px; height: 16px; border-radius: 2px; background: #fff; color: #f50e35; font: 15px/14px "Lato", sans-serif; text-align: center; }
.logo b { font: 700 14px/16px "DejaVu Serif", serif; font-stretch: normal; margin-left: 1px; -webkit-text-stroke: .4px #fff; font-size: 12.5px; letter-spacing: -.2px; }
.logo small { font: 700 8.500px/9px "Lato", sans-serif; letter-spacing: 4.300px; }
.jira-head a { display: flex; align-items: center; white-space: nowrap; }
.jira-head a svg { margin-left: auto; }
.n1 { width: 92px; margin-right: 17px; } .n2 { width: 70px; margin-right: 16px; } .n3 { width: 56px; margin-right: 16px; }
.n4 { width: 62px; margin-right: 17px; } .n5 { width: 51px; margin-right: 16px; }
.jira-head a { padding-right: 2px; }
.create { width: 67px; height: 30px; border-radius: 3px; background: #ad102d; color: #fff; font-weight: 700; justify-content: center; }
.search { margin-left: auto; width: 170px; height: 30px; border-radius: 3px; background: #82143a; color: #96536d; display: flex; align-items: center; gap: 9px; padding-left: 8px; letter-spacing: 0; }
.mega { margin: 0 23px 0 21px; }
.help { width: 21px; height: 21px; border-radius: 50%; background: #fff; color: #f50e35; font-weight: 700; font-size: 17px; line-height: 21px; text-align: center; margin-right: 21px; }

/* rail */
.body { flex: 1; display: flex; min-height: 0; letter-spacing: -.2px; }
.rail { width: 56px; flex: none; background: #f4f5f7; display: flex; flex-direction: column; align-items: center; padding-top: 15px; }
.project { position: relative; width: 32px; height: 32px; }
.project .badge { position: absolute; left: 19px; top: 19px; }
.boards { margin: 20px 0 20px; }
.cell { width: 36px; height: 34px; display: grid; place-items: center; flex: none; border-radius: 3px; }
.cell.on { background: #d0d4dd; }
.expand { margin: auto 0 19px; }

/* board */
.board { flex: 1; display: flex; flex-direction: column; border-bottom: 1px solid #ddd; }
.board-head { height: 127px; flex: none; border-bottom: 2px solid #ebecf0; display: flex; justify-content: space-between; padding: 19px 20px 0; }
.crumb { color: #6b778c; line-height: 20px; }
h1 { margin: 2px 0 0; font-weight: 400; font-size: 23.5px; line-height: 32px; letter-spacing: -.45px; }
.filters { display: flex; align-items: flex-start; margin-top: 13px; line-height: 27px; }
.filters a, .issue a { color: #0052cc; }
.filters a { letter-spacing: -.35px; }
.find { width: 48px; height: 30px; border: 2px solid #dfe1e6; border-radius: 3px; background: #fafbfc; display: flex; justify-content: flex-end; padding: 6px 7px 0 0; }
.qf { margin-left: 10px; width: 111px; font-size: 12px; font-weight: 700; color: #6b778c; white-space: nowrap; letter-spacing: -.05px; }
.f1 { width: 121px; }
.f2 { letter-spacing: -.2px; }
.actions { display: flex; padding-top: 1px; }
.actions button { height: 30px; background: #ebecf0; color: #344563; border-radius: 3px; justify-content: space-between; padding: 0 7px 0 11px; }
.a1 { width: 98px; margin-right: 10px; } .a2 { width: 74px; margin-right: 20px; }
.actions .a3 { width: 38px; padding: 0; justify-content: center; }
.board-body { flex: 1; display: flex; align-items: flex-start; padding-right: 20px; }
.strip { width: 22px; align-self: stretch; border-right: 2px solid #ebecf0; writing-mode: vertical-rl; display: flex; gap: 20px; padding: 10px 1px 0 0; margin-right: 20px; font-size: 12px; font-weight: 700; line-height: 19px; letter-spacing: 0; color: #6b778c; }
.panel { flex: 1; margin-top: 40px; height: 537px; background: #f4f5f7; padding: 16px 20px 0; }
.panel-head { height: 30px; display: flex; align-items: center; }
.panel-head > b, .panel-head > span, .panel-head > svg { margin-bottom: 2px; }
.panel-head .count { color: #6b778c; margin: 0 3px 2px 10px; }
.sprint { margin-left: auto; width: 110px; height: 30px; border-radius: 3px; background: #0052cc; color: #fff; font-weight: 700; justify-content: center; letter-spacing: -.4px; padding-bottom: 1px; }
.more { width: 38px; height: 30px; margin-left: 20px; border-radius: 3px; background: #dfe1e6; justify-content: center; gap: 2px; }
.more i { width: 4px; height: 4px; border-radius: 50%; background: #344563; }
.issues { margin: 22px 10px 0 9px; display: grid; gap: 2px; }
.issue { height: 32px; background: #fff; border-radius: 2px; box-shadow: 0 1px 2px rgba(9, 30, 66, .3), 0 0 1px rgba(9, 30, 66, .4); display: flex; align-items: center; padding: 0 5px 0 10px; white-space: nowrap; }
.s { width: 14px; height: 14px; margin-right: 8px; }
.p { width: 12px; height: 10px; margin-right: 8px; }
.issue a { margin: 0 5px 2px 0; letter-spacing: .08px; }
.issue span { margin-bottom: 2px; letter-spacing: -.27px; }
.issue i { width: 27px; height: 16px; border-radius: 8px; background: #dfe1e6; margin: 2px 0 0 auto; }
.owned i { margin: -2px 0 0 5px; }
.av { width: 24px; height: 24px; margin: -2px 0 0 auto; }
.new-issue { display: flex; align-items: center; gap: 5px; margin: 11px 0 0 33px; line-height: 24px; color: #344563; }
```
